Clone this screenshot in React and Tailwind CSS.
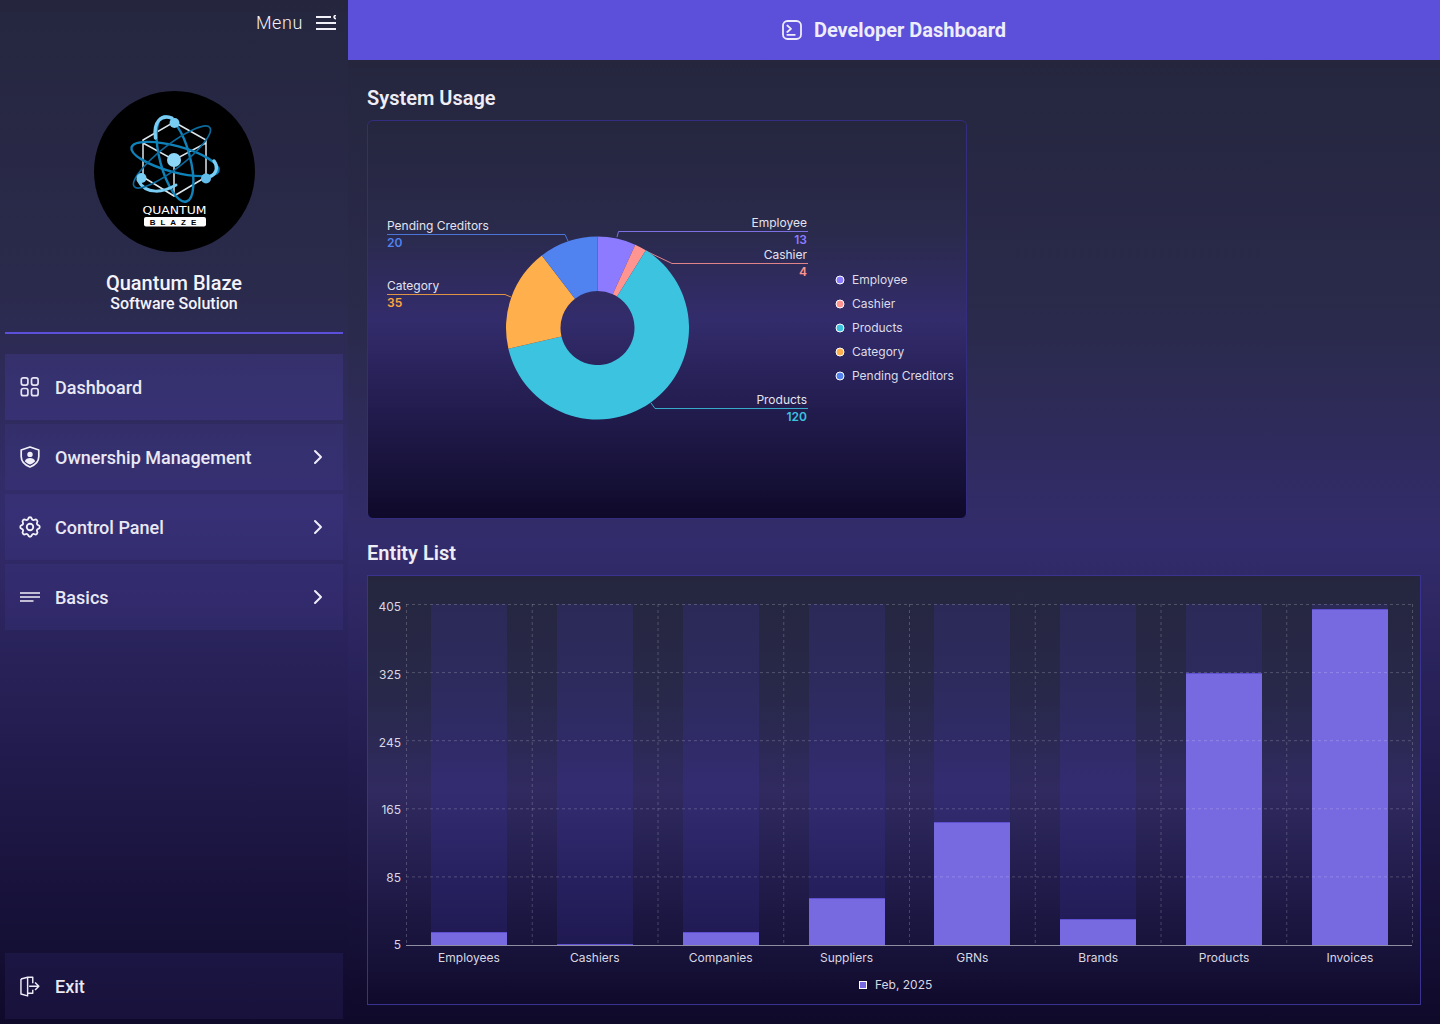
import React from "react";
import { ChevronRight } from "lucide-react";
import { TbSettings } from "react-icons/tb";

const inter = "Inter, sans-serif";

function MenuIcon() {
  return (
    <svg width="20" height="16" viewBox="0 0 20 16" fill="none" stroke="#f1f0f8" strokeWidth="2">
      <path d="M0 2h15M0 8h20M0 14h20" />
      <path d="M20 0.4a2 2 0 0 0-2 1.6a2 2 0 0 0 2 1.6" strokeWidth="1.6" />
    </svg>
  );
}

function TerminalIcon() {
  return (
    <svg width="20" height="20" viewBox="0 0 20 20" fill="none" stroke="#eeedfb" strokeWidth="1.8" strokeLinecap="round" strokeLinejoin="round">
      <rect x="1" y="1" width="18" height="18" rx="4.500" />
      <path d="M5.300 5.500 L9 8.800 L5.300 12" />
      <path d="M5.300 14.800 H12.800" />
    </svg>
  );
}

function DashIcon() {
  return (
    <svg width="20" height="20" viewBox="0 0 20 20" fill="none" stroke="#e6e4f2" strokeWidth="1.7">
      <rect x="1.300" y="0.900" width="6.600" height="7.200" rx="2" />
      <rect x="11.500" y="0.900" width="6.600" height="7.200" rx="2" />
      <rect x="1.300" y="11.500" width="6.600" height="7.200" rx="2" />
      <rect x="11.500" y="11.500" width="6.600" height="7.200" rx="2" />
    </svg>
  );
}

function ShieldIcon() {
  return (
    <svg width="20" height="22" viewBox="0 0 20 22" fill="none">
      <path d="M10 1 L18.800 4 V10.500 C18.800 15.500 15 19 10 21 C5 19 1.200 15.500 1.200 10.500 V4 Z" stroke="#f1f0f8" strokeWidth="1.700" strokeLinejoin="round" />
      <circle cx="10" cy="8.400" r="2.700" fill="#f1f0f8" />
      <path d="M4.800 15.200 C5.600 12.800 7.600 12 10 12 C12.400 12 14.400 12.800 15.200 15.200 C13.800 16.800 12 17.800 10 18.600 C8 17.800 6.200 16.800 4.800 15.200 Z" fill="#f1f0f8" />
    </svg>
  );
}

function LinesIcon() {
  return (
    <svg width="20" height="10" viewBox="0 0 20 10" fill="none" stroke="#f1f0f8" strokeWidth="1.600">
      <path d="M0 1h20M0 5h20M0 9h13.500" />
    </svg>
  );
}

function ExitIcon() {
  return (
    <svg width="21" height="21" viewBox="0 0 21 21" fill="none" stroke="#eeedf7" strokeWidth="1.500" strokeLinejoin="round">
      <path d="M1 2.600 L8 .8 H13.400 V7" />
      <path d="M13.400 14 V17.600 H8" />
      <path d="M1 2.600 V18.400 L8 20.400 V.8" />
      <path d="M9.600 10.200 H19.400 M15.800 6.200 L19.800 10.200 L15.800 14.200" />
    </svg>
  );
}

function Logo() {
  return (
    <div className="w-[161px] h-[161px] rounded-full bg-black overflow-hidden">
      <svg width="161" height="161" viewBox="94 91 161 161" fill="none">
        <path d="M174 122 L206 140 V177 L174 196 L143 177 V140 Z M143 143 L174 160 L206 143 M174 160 V196" stroke="#dbe6ec" strokeWidth="1.500" />
        <ellipse cx="175" cy="159" rx="15" ry="44" transform="rotate(-15 175 159)" stroke="#0f82ba" strokeWidth="2.400" />
        <path d="M155.500 138 C153 122 161 114 172 118" stroke="#7accf2" strokeWidth="3.400" strokeLinecap="round" />
        <ellipse cx="175" cy="159" rx="45" ry="13" transform="rotate(15 175 159)" stroke="#0f82ba" strokeWidth="2.400" />
        <path d="M138 180 C146 196 164 192 176 185" stroke="#7accf2" strokeWidth="3" strokeLinecap="round" />
        <path d="M206 178 C216 176 219 168 214 161" stroke="#7accf2" strokeWidth="3.400" strokeLinecap="round" />
        <ellipse cx="172" cy="157" rx="48" ry="12" transform="rotate(-38 172 157)" stroke="#0b6a9c" strokeWidth="1.600" />
        <circle cx="174" cy="160" r="7" fill="#8cd7f8" />
        <circle cx="174.500" cy="123" r="5" fill="#78cdf3" />
        <circle cx="141.500" cy="178" r="5" fill="#78cdf3" />
        <circle cx="206" cy="178.500" r="5" fill="#62bdea" />
        <text x="142.500" y="213.500" fill="#fff" fontFamily="'DejaVu Sans', sans-serif" fontWeight="400" fontSize="11" textLength="64" lengthAdjust="spacingAndGlyphs">QUANTUM</text>
        <rect x="144" y="217" width="62" height="9.500" rx="2" fill="#fff" />
        <text x="175.500" y="224.800" textAnchor="middle" fill="#000" fontFamily="'Liberation Sans', sans-serif" fontWeight="700" fontSize="8" letterSpacing="5">BLAZE</text>
      </svg>
    </div>
  );
}

function NavItem({ icon, label, chevron, active }) {
  return (
    <div className={`h-[66px] flex items-center pl-[15px] pr-[13px] ${active ? "bg-[#5c50d02e]" : "bg-[#5a4fc81c]"}`}>
      <span className="w-[20px] flex justify-center items-center shrink-0">{icon}</span>
      <span className="ml-[15px] pt-[2px] text-[18px] font-medium text-[#e9e8f4] flex-1 leading-none">{label}</span>
      {chevron && <ChevronRight size={24} strokeWidth={2} color="#eeedf7" />}
    </div>
  );
}

const slices = [
  { name: "Employee", v: 13, c: "#8c7bff" },
  { name: "Cashier", v: 4, c: "#ff9490" },
  { name: "Products", v: 120, c: "#3bc3e0" },
  { name: "Category", v: 35, c: "#ffb04c" },
  { name: "Pending Creditors", v: 20, c: "#5082f0" },
];

function arc(cx, cy, r0, r1, a0, a1) {
  const p = (r, a) => [cx + r * Math.sin(a), cy - r * Math.cos(a)];
  const big = a1 - a0 > Math.PI ? 1 : 0;
  const [x0, y0] = p(r1, a0);
  const [x1, y1] = p(r1, a1);
  const [x2, y2] = p(r0, a1);
  const [x3, y3] = p(r0, a0);
  return `M${x0} ${y0}A${r1} ${r1} 0 ${big} 1 ${x1} ${y1}L${x2} ${y2}A${r0} ${r0} 0 ${big} 0 ${x3} ${y3}Z`;
}

const pieLabels = [
  { name: "Employee", val: "13", c: "#8c7bff", pts: "617,237 618.500,231.500 808,231.500", x: 807, anchor: "end", ly: 223, vy: 240 },
  { name: "Cashier", val: "4", c: "#ff9490", pts: "646,251 672,263.500 808,263.500", x: 807, anchor: "end", ly: 255, vy: 272 },
  { name: "Products", val: "120", c: "#3bc3e0", pts: "651,403 655,408.500 808,408.500", x: 807, anchor: "end", ly: 400, vy: 417 },
  { name: "Category", val: "35", c: "#ffa63d", pts: "387,294.500 505,294.500 511,297", x: 387, anchor: "start", ly: 286, vy: 303 },
  { name: "Pending Creditors", val: "20", c: "#5082f0", pts: "387,234.500 565,234.500 568,241", x: 387, anchor: "start", ly: 226, vy: 243 },
];

function PieChart() {
  const total = slices.reduce((s, d) => s + d.v, 0);
  let a = 0;
  return (
    <svg width="598" height="397" viewBox="368 121 598 397" style={{ fontFamily: inter }}>
      {pieLabels.map((l) => (
        <g key={l.name}>
          <polyline points={l.pts} fill="none" stroke={l.c} strokeWidth="1" strokeOpacity="0.85" />
          <text x={l.x} y={l.ly + 4.400} textAnchor={l.anchor} fontSize="12" fill="#e4e3ee">{l.name}</text>
          <text x={l.x} y={l.vy + 4.400} textAnchor={l.anchor} fontSize="12" fontWeight="600" fill={l.c}>{l.val}</text>
        </g>
      ))}
      {slices.map((d) => {
        const a0 = a;
        a += (d.v / total) * Math.PI * 2;
        return <path key={d.name} d={arc(597.5, 328, 37, 91.5, a0, a)} fill={d.c} />;
      })}
      {slices.map((d, i) => (
        <g key={d.name}>
          <circle cx="840" cy={280 + i * 24} r="4" fill={d.c} stroke="#fff" strokeWidth="1" />
          <text x="852" y={284 + i * 24} fontSize="12" fill="#dcdbe8">{d.name}</text>
        </g>
      ))}
    </svg>
  );
}

const bars = [
  ["Employees", 932],
  ["Cashiers", 944],
  ["Companies", 932],
  ["Suppliers", 898],
  ["GRNs", 822],
  ["Brands", 919],
  ["Products", 673],
  ["Invoices", 609],
];

function BarChart() {
  const left = 406;
  const step = 125.75;
  const ticks = [405, 325, 245, 165, 85, 5];
  const labelY = [610.500, 678.500, 746.500, 813.500, 881.500, 949];
  const y = (i) => 604.5 + i * 68.1;
  return (
    <svg width="1052" height="428" viewBox="368 576 1052 428" style={{ fontFamily: inter }}>
      {bars.map(([name, top], i) => {
        const x = Math.round(431 + i * 125.85);
        return (
          <g key={name}>
            <rect x={x} y="604" width="76" height="341" fill="#4a3ad8" fillOpacity="0.15" />
            <rect x={x} y={top} width="76" height={945 - top} fill="#7769e0" />
            <rect x={x} y={top} width="76" height="1" fill="#5f50d2" />
          </g>
        );
      })}
      {ticks.slice(0, 5).map((t, i) => (
        <line key={t} x1="406" x2="1412" y1={y(i)} y2={y(i)} stroke="#ffffff" strokeOpacity="0.2" strokeDasharray="3 3" />
      ))}
      {Array.from({ length: 9 }).map((_, i) => (
        <line key={i} x1={left + i * step + 0.5} x2={left + i * step + 0.5} y1="604" y2="945" stroke="#ffffff" strokeOpacity="0.2" strokeDasharray="3 3" />
      ))}
      <line x1="406" x2="1412" y1="945.500" y2="945.500" stroke="#8f8ea2" />
      {ticks.map((t, i) => (
        <text key={t} x="401" y={labelY[i]} textAnchor="end" fontSize="12" fill="#d8d7e2">{t}</text>
      ))}
      {bars.map(([name], i) => (
        <text key={name} x={469 + i * 125.85} y="962" textAnchor="middle" fontSize="12" fill="#d8d7e2">{name}</text>
      ))}
      <rect x="859.500" y="981.500" width="7" height="7" fill="#7769e0" stroke="#fff" strokeWidth="1" />
      <text x="875" y="989.300" fontSize="12" fill="#d8d7e2">Feb, 2025</text>
    </svg>
  );
}

export default function App() {
  const grad = "bg-[linear-gradient(180deg,#25263e_0%,#2a2a4c_28%,#332c6c_50%,#241e52_70%,#0f0a2a_100%)]";
  const chartGrad = "bg-[linear-gradient(180deg,#25263e_0%,#28284a_28%,#302a60_50%,#221d4c_70%,#100b2c_100%)]";
  return (
    <div className="flex w-[1440px] h-[1024px] overflow-hidden text-white font-['Roboto',sans-serif]">
      <aside className={`w-[348px] shrink-0 flex flex-col px-[5px] pb-[5px] ${grad}`}>
        <div className="h-[45px] flex items-center justify-end pr-[7px] gap-[13px]">
          <span className="text-[18px] font-light tracking-[0.6px] text-[#f4f3fa]">Menu</span>
          <MenuIcon />
        </div>
        <div className="mt-[46px] flex flex-col items-center">
          <Logo />
          <div className="mt-[19px] text-[20px] font-medium leading-[24px] text-[#f4f3fa]">Quantum Blaze</div>
          <div className="text-[16px] font-medium leading-[18px] text-[#f4f3fa]">Software Solution</div>
        </div>
        <div className="mt-[19px] h-[2px] bg-[#5c4fd9]" />
        <nav className="mt-[20px] flex flex-col gap-[4px]">
          <NavItem active icon={<DashIcon />} label="Dashboard" />
          <NavItem icon={<ShieldIcon />} label="Ownership Management" chevron />
          <NavItem icon={<TbSettings size={26} strokeWidth={1.7} color="#f1f0f8" className="shrink-0" />} label="Control Panel" chevron />
          <NavItem icon={<LinesIcon />} label="Basics" chevron />
        </nav>
        <div className="mt-auto">
          <NavItem icon={<ExitIcon />} label="Exit" />
        </div>
      </aside>
      <main className="flex-1 flex flex-col min-w-0">
        <header className="h-[60px] bg-[#5c4fd9] flex items-center justify-center gap-[12px]">
          <TerminalIcon />
          <h1 className="text-[20px] font-bold text-[#eeedfb]">Developer Dashboard</h1>
        </header>
        <div className={`flex-1 px-[19px] pt-[24px] ${grad}`}>
          <h2 className="text-[20px] font-semibold leading-[28px] text-[#eeedf6]">System Usage</h2>
          <div className={`mt-[8px] w-[600px] h-[399px] border border-[#332c80] rounded-[6px] overflow-hidden ${grad}`}>
            <PieChart />
          </div>
          <h2 className="mt-[20px] text-[20px] font-semibold leading-[28px] text-[#eeedf6]">Entity List</h2>
          <div className={`mt-[8px] h-[430px] border border-[#3a3290] overflow-hidden ${chartGrad}`}>
            <BarChart />
          </div>
        </div>
      </main>
    </div>
  );
}
